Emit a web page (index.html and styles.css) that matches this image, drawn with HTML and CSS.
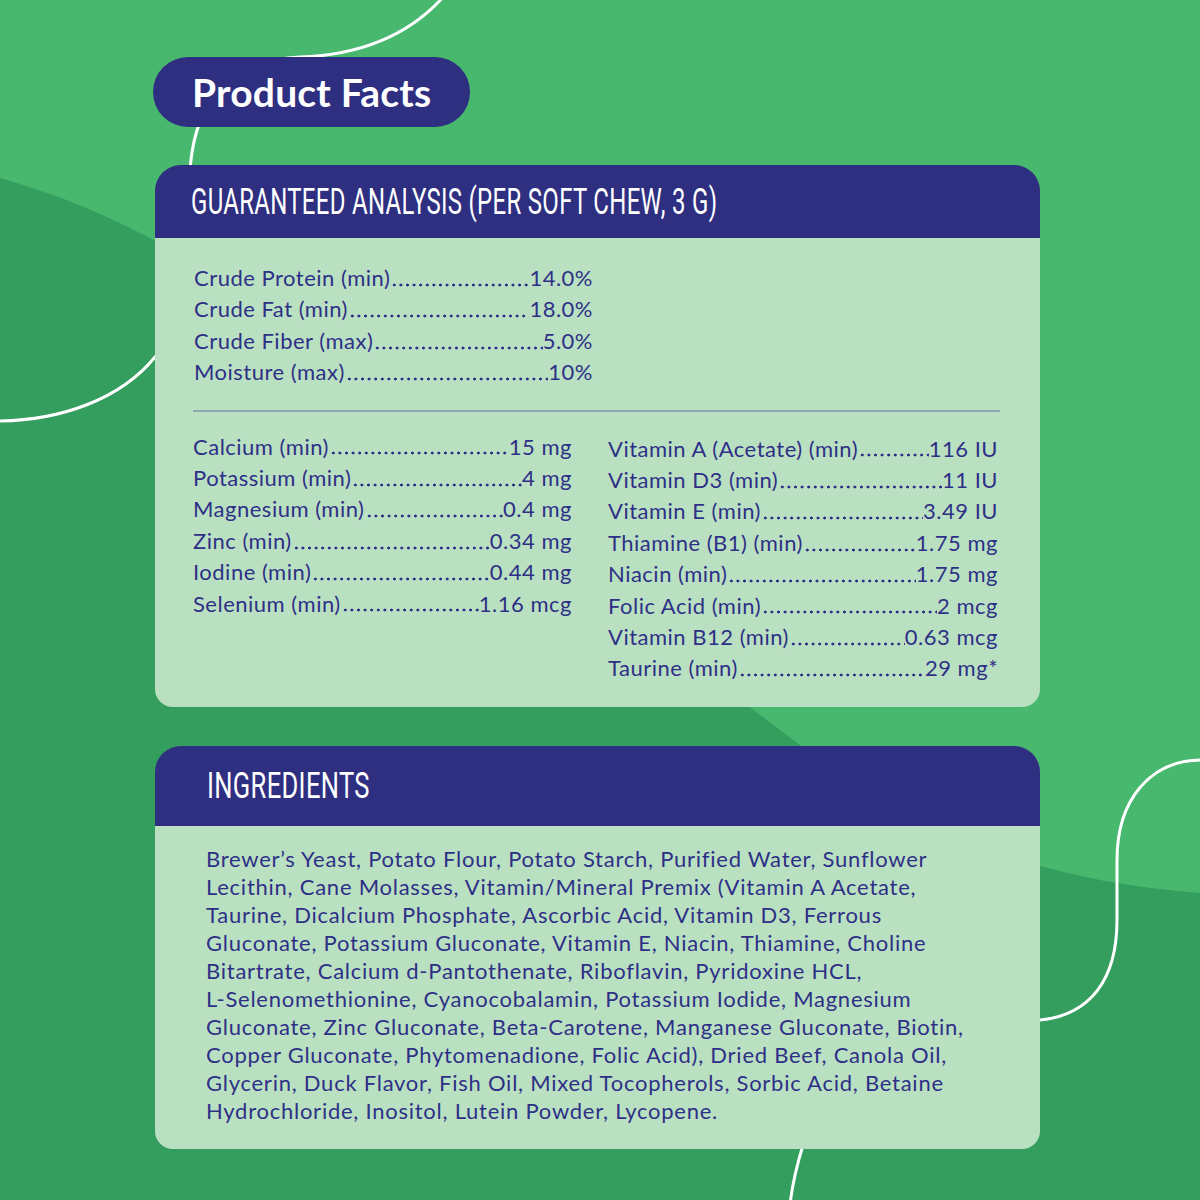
FILE: index.html
```html
<!DOCTYPE html>
<html lang="en">
<head>
<meta charset="utf-8">
<title>Product Facts</title>
<link rel="stylesheet" href="styles.css">
</head>
<body>
<div class="page">
  <svg class="bg" width="1200" height="1200" viewBox="0 0 1200 1200" aria-hidden="true">
    <path class="bg-dark" d="M0,178 C300,260 560,570 800,745 C930,840 1050,882 1200,893 L1200,1200 L0,1200 Z"/>
    <path class="bg-line" d="M445,-5 C410,35 360,55 300,57 C230,60 195,100 190,170 C185,300 170,340 155,357 C120,400 60,420 0,421"/>
    <path class="bg-line" d="M1202,760 C1150,760 1117,800 1117,860 L1117,920 C1117,980 1090,1015 1040,1020"/>
    <path class="bg-line" d="M803,1145 C797,1165 792,1185 790,1205"/>
  </svg>

  <main class="content">
    <div class="pill">Product Facts</div>

    <section class="card card-analysis">
      <header class="card-head"><h2 class="head-text">GUARANTEED ANALYSIS (PER SOFT CHEW, 3 G)</h2></header>
      <div class="card-body">
        <div class="list list-top">
          <div class="row"><span class="lbl">Crude Protein (min)</span><span class="dots"></span><span class="val">14.0%</span></div>
          <div class="row"><span class="lbl">Crude Fat (min)</span><span class="dots"></span><span class="val">18.0%</span></div>
          <div class="row"><span class="lbl">Crude Fiber (max)</span><span class="dots"></span><span class="val">5.0%</span></div>
          <div class="row"><span class="lbl">Moisture (max)</span><span class="dots"></span><span class="val">10%</span></div>
        </div>
        <hr class="divider">
        <div class="cols">
          <div class="list list-left">
            <div class="row"><span class="lbl">Calcium (min)</span><span class="dots"></span><span class="val">15 mg</span></div>
            <div class="row"><span class="lbl">Potassium (min)</span><span class="dots"></span><span class="val">4 mg</span></div>
            <div class="row"><span class="lbl">Magnesium (min)</span><span class="dots"></span><span class="val">0.4 mg</span></div>
            <div class="row"><span class="lbl">Zinc (min)</span><span class="dots"></span><span class="val">0.34 mg</span></div>
            <div class="row"><span class="lbl">Iodine (min)</span><span class="dots"></span><span class="val">0.44 mg</span></div>
            <div class="row"><span class="lbl">Selenium (min)</span><span class="dots"></span><span class="val">1.16 mcg</span></div>
          </div>
          <div class="list list-right">
            <div class="row"><span class="lbl">Vitamin A (Acetate) (min)</span><span class="dots"></span><span class="val">116 IU</span></div>
            <div class="row"><span class="lbl">Vitamin D3 (min)</span><span class="dots"></span><span class="val">11 IU</span></div>
            <div class="row"><span class="lbl">Vitamin E (min)</span><span class="dots"></span><span class="val">3.49 IU</span></div>
            <div class="row"><span class="lbl">Thiamine (B1) (min)</span><span class="dots"></span><span class="val">1.75 mg</span></div>
            <div class="row"><span class="lbl">Niacin (min)</span><span class="dots"></span><span class="val">1.75 mg</span></div>
            <div class="row"><span class="lbl">Folic Acid (min)</span><span class="dots"></span><span class="val">2 mcg</span></div>
            <div class="row"><span class="lbl">Vitamin B12 (min)</span><span class="dots"></span><span class="val">0.63 mcg</span></div>
            <div class="row"><span class="lbl">Taurine (min)</span><span class="dots"></span><span class="val">29 mg*</span></div>
          </div>
        </div>
      </div>
    </section>

    <section class="card card-ingredients">
      <header class="card-head card-head-tall"><h2 class="head-text head-text-wide">INGREDIENTS</h2></header>
      <div class="card-body ingredients-body">
        <p class="ingredients">Brewer’s Yeast, Potato Flour, Potato Starch, Purified Water, Sunflower<br>
Lecithin, Cane Molasses, Vitamin/Mineral Premix (Vitamin A Acetate,<br>
Taurine, Dicalcium Phosphate, Ascorbic Acid, Vitamin D3, Ferrous<br>
Gluconate, Potassium Gluconate, Vitamin E, Niacin, Thiamine, Choline<br>
Bitartrate, Calcium d-Pantothenate, Riboflavin, Pyridoxine HCL,<br>
L-Selenomethionine, Cyanocobalamin, Potassium Iodide, Magnesium<br>
Gluconate, Zinc Gluconate, Beta-Carotene, Manganese Gluconate, Biotin,<br>
Copper Gluconate, Phytomenadione, Folic Acid), Dried Beef, Canola Oil,<br>
Glycerin, Duck Flavor, Fish Oil, Mixed Tocopherols, Sorbic Acid, Betaine<br>
Hydrochloride, Inositol, Lutein Powder, Lycopene.</p>
      </div>
    </section>
  </main>
</div>
</body>
</html>
```

FILE: styles.css
```css
* { box-sizing: border-box; }

html, body {
  margin: 0;
  padding: 0;
}

body {
  width: 1200px;
  height: 1200px;
  overflow: hidden;
  background: #49b86f;
  font-family: "Lato", "Noto Sans", sans-serif;
  color: #2e3086;
}

.page {
  position: relative;
  width: 1200px;
  height: 1200px;
  overflow: hidden;
}

.bg {
  position: absolute;
  left: 0;
  top: 0;
  z-index: 0;
}

.bg-dark { fill: #349e5e; }

.bg-line {
  fill: none;
  stroke: #ffffff;
  stroke-width: 3;
}

.content {
  position: relative;
  z-index: 1;
  padding: 57px 0 0 153px;
  display: flex;
  flex-direction: column;
  align-items: flex-start;
}

.pill {
  width: 317px;
  height: 70px;
  border-radius: 35px;
  background: #2e2f80;
  color: #ffffff;
  font-family: "Lato", sans-serif;
  font-weight: 700;
  font-size: 39px;
  line-height: 70px;
  padding-left: 39px;
  white-space: nowrap;
  letter-spacing: 0.2px;
}

.card {
  width: 885px;
  margin-left: 2px;
  display: flex;
  flex-direction: column;
}

.card-analysis { margin-top: 38px; }
.card-ingredients { margin-top: 39px; }

.card-head {
  height: 73px;
  background: #2e2f80;
  border-radius: 26px 26px 0 0;
  display: flex;
  align-items: center;
  padding-left: 36px;
  overflow: hidden;
}

.card-head-tall {
  height: 80px;
  padding-left: 52px;
}

.head-text {
  margin: 0;
  color: #ffffff;
  font-family: "Roboto", sans-serif;
  font-weight: 400;
  font-size: 37px;
  line-height: 1;
  white-space: nowrap;
  display: inline-block;
  transform: scaleX(0.647);
  transform-origin: left center;
  letter-spacing: 0.5px;
}

.head-text-wide {
  transform: scaleX(0.69);
}

.card-body {
  background: #bae0c2;
  border-radius: 0 0 18px 18px;
  padding: 24px 40px 23px 38px;
}

.list {
  display: flex;
  flex-direction: column;
  font-size: 22px;
  line-height: 31.4px;
}

.list-top {
  width: 399px;
  margin-left: 1px;
}

.row {
  display: flex;
  white-space: nowrap;
}

.lbl, .val {
  flex: none;
  letter-spacing: 0.5px;
}

.dots {
  flex: 1 1 auto;
  min-width: 0;
  background-image: radial-gradient(circle at center, #2e3086 1.25px, rgba(46, 48, 134, 0) 1.75px);
  background-size: 6.6px 4px;
  background-repeat: repeat-x;
  background-position: left 1px bottom 6.7px;
}

.divider {
  border: 0;
  height: 2px;
  background: #8fa9b3;
  margin: 22px 0 19px;
  width: 807px;
}

.cols {
  display: grid;
  grid-template-columns: 379px 390px;
  column-gap: 36px;
}

.list-right { margin-top: 2px; }

.ingredients-body {
  padding: 19px 20px 24px 51px;
}

.ingredients {
  margin: 0;
  font-size: 22px;
  line-height: 28px;
  white-space: nowrap;
  letter-spacing: 0.75px;
}
```
